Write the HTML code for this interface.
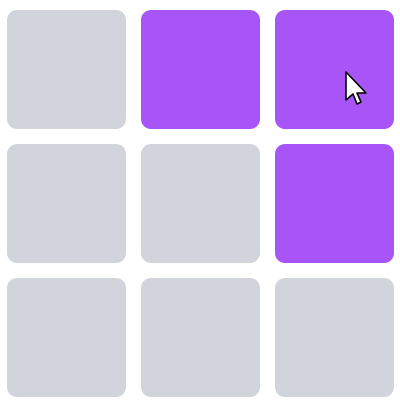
<!DOCTYPE html>
<html><head><style>
html,body{margin:0;padding:0;width:400px;height:400px;background:#fff;overflow:hidden}
.c{position:absolute;width:119px;height:119px;border-radius:10px;background:#d1d5db}
.p{background:#a855f7}
svg{position:absolute}
</style></head><body>
<div class="c" style="left:7px;top:10px"></div>
<div class="c p" style="left:141px;top:10px"></div>
<div class="c p" style="left:275px;top:10px"></div>
<div class="c" style="left:7px;top:144px"></div>
<div class="c" style="left:141px;top:144px"></div>
<div class="c p" style="left:275px;top:144px"></div>
<div class="c" style="left:7px;top:278px"></div>
<div class="c" style="left:141px;top:278px"></div>
<div class="c" style="left:275px;top:278px"></div>
<svg style="left:344px;top:70px" width="28" height="38" viewBox="0 0 28 38">
<path d="M2 2 L2 30 L9 24 L13 34 L17 32 L13 23 L22 23 Z" fill="#fff" stroke="#000" stroke-width="1.6" stroke-linejoin="round"/>
</svg>
</body></html>
